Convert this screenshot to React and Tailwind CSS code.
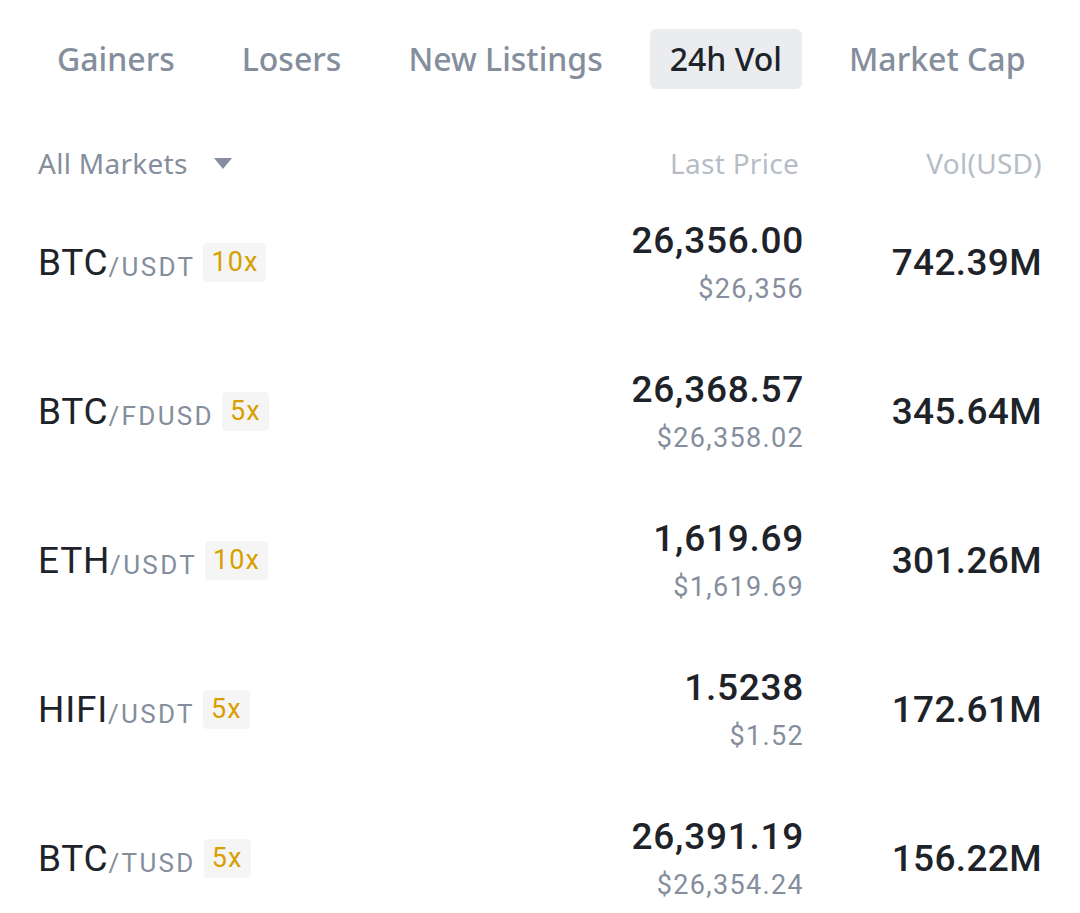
import React, { useState } from 'react';

const tabs = ['Gainers', 'Losers', 'New Listings', '24h Vol', 'Market Cap'];

const rows = [
  { base: 'BTC', quote: 'USDT', lev: '10x', price: '26,356.00', usd: '$26,356', vol: '742.39M' },
  { base: 'BTC', quote: 'FDUSD', lev: '5x', price: '26,368.57', usd: '$26,358.02', vol: '345.64M' },
  { base: 'ETH', quote: 'USDT', lev: '10x', price: '1,619.69', usd: '$1,619.69', vol: '301.26M' },
  { base: 'HIFI', quote: 'USDT', lev: '5x', price: '1.5238', usd: '$1.52', vol: '172.61M' },
  { base: 'BTC', quote: 'TUSD', lev: '5x', price: '26,391.19', usd: '$26,354.24', vol: '156.22M' },
];

const textFont = { fontFamily: '"Noto Sans", Roboto, sans-serif' };

function MarketRow({ row }) {
  return (
    <div className="grid grid-cols-[1fr_auto_238px] items-center h-[149px]">
      <div className="flex items-center">
        <span className="text-[37px] leading-none tracking-[0.02em] text-[#1e2329]">{row.base}</span>
        <span className="text-[26px] leading-none tracking-[0.09em] text-[#848e9c] self-end pb-[2px]">/{row.quote}</span>
        <span className="ml-[8px] h-[39px] px-[8px] flex items-center rounded-[4px] bg-[#f5f5f5] text-[27px] tracking-[0.04em] text-[#d89f00]">
          {row.lev}
        </span>
      </div>
      <div className="flex flex-col items-end">
        <span className="text-[37px] leading-[44px] font-medium tracking-[0.02em] text-[#1e2329]">{row.price}</span>
        <span className="mt-[9px] text-[27px] leading-[34px] tracking-[0.05em] text-[#848e9c]">{row.usd}</span>
      </div>
      <div className="text-right text-[37px] font-medium tracking-[0.01em] text-[#1e2329]">{row.vol}</div>
    </div>
  );
}

export default function App() {
  const [active, setActive] = useState('24h Vol');

  return (
    <div className="w-[1080px] h-[913px] overflow-hidden bg-white pt-[29px] px-[38px]" style={{ fontFamily: 'Roboto, "Noto Sans", sans-serif' }}>
      {/* tabs */}
      <div className="flex gap-[27px] -ml-[1px] whitespace-nowrap" style={textFont}>
        {tabs.map(t => (
          <button
            key={t}
            onClick={() => setActive(t)}
            className={
              'shrink-0 whitespace-nowrap h-[60px] px-[20px] rounded-[6px] text-[32px] font-medium ' +
              (active === t ? 'bg-[#eaecef] text-[#1e2329]' : 'text-[#848e9c]')
            }
          >
            {t}
          </button>
        ))}
      </div>

      {/* header */}
      <div className="grid grid-cols-[1fr_auto_238px] items-center h-[50px] mt-[49px] text-[28px] tracking-[0.01em]" style={textFont}>
        <div className="flex items-center text-[#848e9c]">
          <span>All Markets</span>
          <svg className="ml-[26px]" width="18" height="11" viewBox="0 0 18 11">
            <path d="M0 0H18L9 11Z" fill="#848e9c" />
          </svg>
        </div>
        <div className="text-right text-[#b7bdc6] pr-[5px]">Last Price</div>
        <div className="text-right text-[#b7bdc6]">Vol(USD)</div>
      </div>

      {rows.map((r, i) => (
        <MarketRow key={i} row={r} />
      ))}
    </div>
  );
}
